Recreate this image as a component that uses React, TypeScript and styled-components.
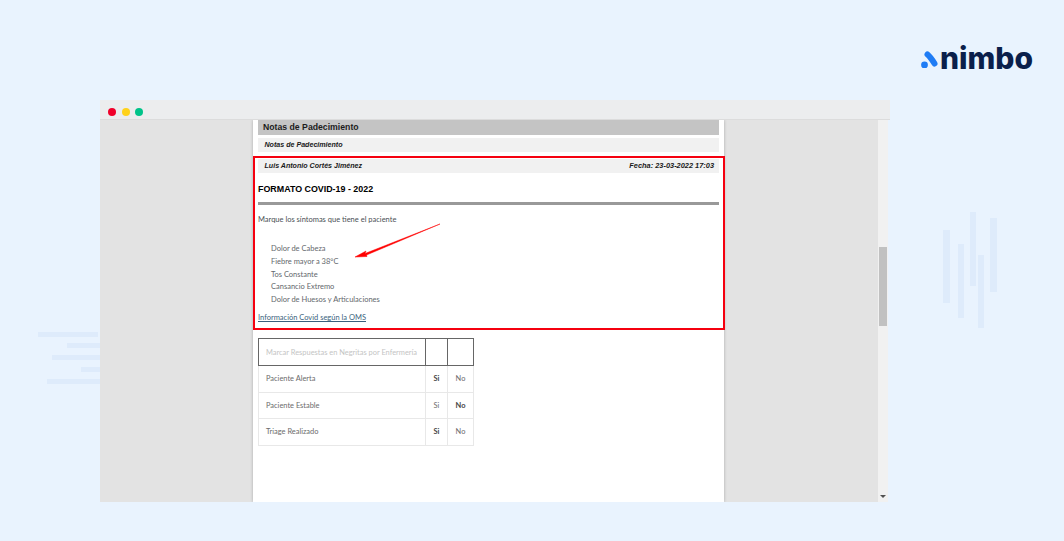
import React from "react";
import styled, { createGlobalStyle } from "styled-components";

const GlobalStyle = createGlobalStyle`
  html, body {
    margin: 0;
    padding: 0;
    background: #e9f3fe;
    font-family: "Lato", "Liberation Sans", sans-serif;
    overflow: hidden;
  }
`;

const Page = styled.div`
  position: relative;
  width: 1064px;
  height: 541px;
  overflow: hidden;
`;

const Header = styled.header`
  height: 100px;
  display: flex;
  justify-content: flex-end;
  align-items: flex-start;
  padding: 38px 31px 0 0;
  box-sizing: border-box;
`;

const Logo = styled.div`
  display: flex;
  align-items: center;
`;

const LogoText = styled.span`
  font-family: "Inter", "Liberation Sans", sans-serif;
  font-size: 30px;
  line-height: 40px;
  font-weight: 800;
  color: #0b1f4b;
`;

const Decor = styled.div<{ $x: number; $y: number; $w: number; $h: number }>`
  position: absolute;
  left: ${(p) => p.$x}px;
  top: ${(p) => p.$y}px;
  width: ${(p) => p.$w}px;
  height: ${(p) => p.$h}px;
  background: #deebfb;
`;

const Window = styled.div`
  position: relative;
  width: 790px;
  margin-left: 100px;
`;

const TitleBar = styled.div`
  height: 20px;
  background: #ecedee;
  display: flex;
  align-items: center;
  gap: 5.5px;
  padding: 4px 0 0 8px;
  box-sizing: border-box;
  border-bottom: 1px solid #dcdcdc;
`;

const Dot = styled.span<{ $color: string }>`
  width: 8px;
  height: 8px;
  border-radius: 50%;
  background: ${(p) => p.$color};
`;

const Viewport = styled.div`
  width: 788px;
  height: 382px;
  display: flex;
  overflow: hidden;
`;

const Canvas = styled.div`
  flex: 1;
  background: #e3e3e3;
  display: flex;
  justify-content: center;
`;

const Sheet = styled.div`
  width: 461px;
  height: 100%;
  margin-left: -1px;
  padding: 0 5px;
  background: #fff;
  box-shadow: 0 0 3px rgba(0, 0, 0, 0.25);
`;

const SectionBar = styled.div`
  height: 15px;
  background: #c4c4c4;
  padding-left: 5px;
  font-family: "Liberation Sans", sans-serif;
  font-size: 8.7px;
  line-height: 14px;
  font-weight: 700;
  color: #1c1c1c;
`;

const NoteBar = styled.div<{ $flush?: boolean }>`
  height: 14px;
  margin-top: ${(p) => (p.$flush ? 0 : 3)}px;
  background: #f1f1f1;
  padding: 0 5px 0 6.5px;
  display: flex;
  justify-content: space-between;
  font-family: "Liberation Sans", sans-serif;
  font-size: 7.1px;
  line-height: 14px;
  font-style: italic;
  font-weight: 700;
  color: #1a1a1a;
`;

const NoteDate = styled.span`
  font-size: 7.4px;
`;

const RedFrame = styled.section`
  position: relative;
  margin: 4px -6px 0 -5px;
  height: 174px;
  box-sizing: border-box;
  border: 2px solid #f5000f;
  padding: 1px 4px 0 3px;
`;

const FormTitle = styled.h2`
  margin: 10px 0 0;
  font-family: "Liberation Sans", sans-serif;
  font-size: 8.9px;
  line-height: 12px;
  font-weight: 700;
  color: #000;
`;

const Rule = styled.hr`
  margin: 7px 0 0;
  border: 0;
  height: 3px;
  background: #999;
`;

const Lead = styled.p`
  margin: 9px 0 0;
  font-size: 7.5px;
  line-height: 11px;
  color: #4a4f55;
`;

const SymptomList = styled.ul`
  list-style: none;
  margin: 17px 0 0;
  padding: 0 0 0 13px;
`;

const Symptom = styled.li`
  height: 12.8px;
  font-size: 7.5px;
  line-height: 13px;
  color: #63676c;
`;

const InfoLink = styled.a`
  display: block;
  margin-top: 6px;
  font-size: 7.5px;
  line-height: 11px;
  color: #3a5f7d;
  text-decoration: underline;
`;

const Arrow = styled.svg`
  position: absolute;
  left: 90px;
  top: 60px;
`;

const AnswerTable = styled.table`
  margin-top: 8px;
  width: 215px;
  border-collapse: collapse;
  table-layout: fixed;
  font-size: 7.45px;
  color: #5c5f63;
`;

const Col = styled.col<{ $w: number }>`
  width: ${(p) => p.$w}px;
`;

const HeadCell = styled.td`
  height: 26px;
  padding: 0 0 0 7px;
  border: 1px solid #666;
  color: #c4c4c4;
  white-space: nowrap;
`;

const Cell = styled.td<{ $center?: boolean; $bold?: boolean }>`
  height: 25.6px;
  padding: ${(p) => (p.$center ? "0" : "0 0 0 7px")};
  border: 1px solid #e8e8e8;
  text-align: ${(p) => (p.$center ? "center" : "left")};
  font-weight: ${(p) => (p.$bold ? 700 : 400)};
  color: ${(p) => (p.$bold ? "#444" : "#6b6b6b")};
`;

const ScrollTrack = styled.div`
  position: relative;
  width: 10px;
  background: #f1f1f1;
`;

const ScrollThumb = styled.div`
  position: absolute;
  left: 1px;
  top: 127px;
  width: 8px;
  height: 79px;
  background: #c1c1c1;
`;

const ScrollArrow = styled.div`
  position: absolute;
  left: 2px;
  bottom: 4px;
  width: 0;
  height: 0;
  border-left: 3px solid transparent;
  border-right: 3px solid transparent;
  border-top: 3px solid #505050;
`;

const bars = [
  [943, 230, 7, 73],
  [958, 244, 6, 74],
  [970, 212, 6, 74],
  [978, 255, 6, 73],
  [990, 218, 7, 74],
  [38, 332, 60, 5],
  [67, 343, 33, 5],
  [52, 355, 48, 5],
  [81, 367, 19, 5],
  [47, 379, 53, 5],
];

const symptoms = [
  "Dolor de Cabeza",
  "Fiebre mayor a 38°C",
  "Tos Constante",
  "Cansancio Extremo",
  "Dolor de Huesos y Articulaciones",
];

const answers = [
  { label: "Paciente Alerta", yes: true },
  { label: "Paciente Estable", yes: false },
  { label: "Triage Realizado", yes: true },
];

export default function App() {
  return (
    <Page>
      <GlobalStyle />
      {bars.map(([x, y, w, h], i) => (
        <Decor key={i} $x={x} $y={y} $w={w} $h={h} />
      ))}
      <Header>
        <Logo>
          <svg width="20" height="20" viewBox="0 0 20 20">
            <path d="M7.5 6.5 Q10.5 9 14.5 15.5" stroke="#1f7cf5" strokeWidth="6" strokeLinecap="round" fill="none" />
            <circle cx="4.5" cy="17" r="3.4" fill="#1f7cf5" />
          </svg>
          <LogoText>nimbo</LogoText>
        </Logo>
      </Header>
      <Window>
        <TitleBar>
          <Dot $color="#f0002a" />
          <Dot $color="#ffd21a" />
          <Dot $color="#00c389" />
        </TitleBar>
        <Viewport>
          <Canvas>
            <Sheet>
              <SectionBar>Notas de Padecimiento</SectionBar>
              <NoteBar>
                <span>Notas de Padecimiento</span>
              </NoteBar>
              <RedFrame>
                <NoteBar $flush>
                  <span>Luis Antonio Cortés Jiménez</span>
                  <NoteDate>Fecha: 23-03-2022 17:03</NoteDate>
                </NoteBar>
                <FormTitle>FORMATO COVID-19 - 2022</FormTitle>
                <Rule />
                <Lead>Marque los síntomas que tiene el paciente</Lead>
                <SymptomList>
                  {symptoms.map((s) => (
                    <Symptom key={s}>{s}</Symptom>
                  ))}
                </SymptomList>
                <InfoLink>Información Covid según la OMS</InfoLink>
                <Arrow width="100" height="50" viewBox="0 0 100 50">
                  <path d="M95 6 L20 35.5 L21 33 L10 39 L22 38.5 L21.5 37 Z" fill="#f00" stroke="#f00" strokeWidth="0.5" />
                </Arrow>
              </RedFrame>
              <AnswerTable>
                <colgroup>
                  <Col $w={167} />
                  <Col $w={22} />
                  <Col $w={26} />
                </colgroup>
                <tbody>
                  <tr>
                    <HeadCell>Marcar Respuestas en Negritas por Enfermería</HeadCell>
                    <HeadCell />
                    <HeadCell />
                  </tr>
                  {answers.map((a) => (
                    <tr key={a.label}>
                      <Cell>{a.label}</Cell>
                      <Cell $center $bold={a.yes}>Si</Cell>
                      <Cell $center $bold={!a.yes}>No</Cell>
                    </tr>
                  ))}
                </tbody>
              </AnswerTable>
            </Sheet>
          </Canvas>
          <ScrollTrack>
            <ScrollThumb />
            <ScrollArrow />
          </ScrollTrack>
        </Viewport>
      </Window>
    </Page>
  );
}
